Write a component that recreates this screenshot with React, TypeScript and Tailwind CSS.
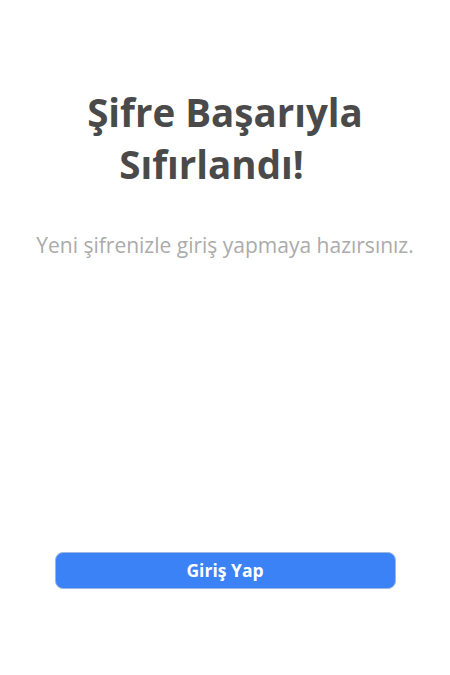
export default function App() {
  return (
    <div className="min-h-[675px] w-[450px] bg-white flex flex-col items-center font-['Open_Sans',sans-serif]">
      <h1 className="mt-[86px] w-[340px] text-center text-[38.5px] leading-[52px] font-bold text-[#4a4a4a]">
        Şifre Başarıyla Sıfırlandı!<span className="inline-block w-[27px]" />
      </h1>
      <p className="mt-[40px] text-center text-[21px] text-[#ababab]">
        Yeni şifrenizle giriş yapmaya hazırsınız.
      </p>
      <button className="mt-[290px] w-[341px] h-[37px] rounded-lg bg-[#3b82f6] border border-[#9db8e0] text-white font-bold text-[17.5px]">
        Giriş Yap
      </button>
    </div>
  );
}
